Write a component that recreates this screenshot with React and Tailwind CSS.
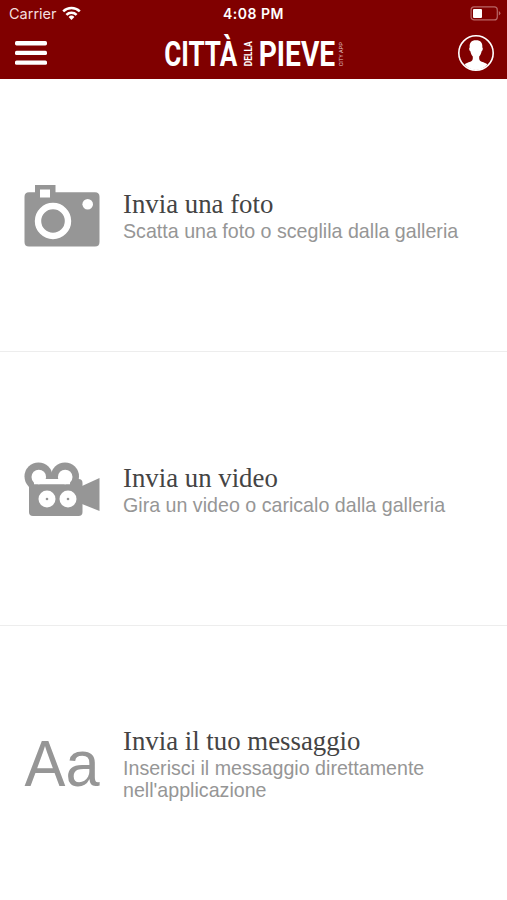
import React from 'react'

function WifiIcon() {
  return (
    <svg width="19" height="15" viewBox="0 0 19 15" fill="none" stroke="white" strokeWidth="2.5">
      <path d="M1.2 5.3a12 12 0 0 1 16.6 0" />
      <path d="M4.4 8.8a7.3 7.3 0 0 1 10.2 0" />
      <path d="M9.5 14 6.6 11a4.1 4.1 0 0 1 5.8 0Z" fill="white" stroke="none" />
    </svg>
  )
}

function BatteryIcon() {
  return (
    <svg width="31" height="15" viewBox="0 0 31 15">
      <rect x="1.1" y="0.9" width="26.2" height="13" rx="3" fill="none" stroke="#b96666" strokeWidth="1.2" />
      <rect x="3" y="3" width="9" height="9" rx="1" fill="white" />
      <path d="M28.8 5v4.6q1.6-.8 1.6-2.3T28.8 5Z" fill="#b96666" />
    </svg>
  )
}

function MenuIcon() {
  return (
    <svg width="32" height="26" viewBox="0 0 32 26" fill="white">
      <rect width="32" height="4.4" rx="1.6" y="1" />
      <rect width="32" height="4.4" rx="1.6" y="10.7" />
      <rect width="32" height="4.4" rx="1.6" y="20.4" />
    </svg>
  )
}

function Logo() {
  return (
    <svg width="181" height="44" viewBox="0 -4 181 44" className="overflow-visible" fill="white" fontFamily="Roboto, sans-serif" fontWeight="700">
      <text x="2.2" y="31" fontSize="34.5" textLength="73" lengthAdjust="spacingAndGlyphs">CITTÀ</text>
      <text transform="translate(90.2 31.3) rotate(-90)" fontSize="10.6" textLength="25" lengthAdjust="spacingAndGlyphs">DELLA</text>
      <text x="96.7" y="31" fontSize="34.5" textLength="76.5" lengthAdjust="spacingAndGlyphs">PIEVE</text>
      <text transform="translate(180.7 31.3) rotate(-90)" fontSize="5.6" fontWeight="400" fillOpacity="0.75" textLength="24" lengthAdjust="spacingAndGlyphs">CITY APP</text>
    </svg>
  )
}

function ProfileIcon() {
  return (
    <svg width="38" height="38" viewBox="0 0 38 38">
      <circle cx="19" cy="19" r="17.2" fill="none" stroke="white" strokeWidth="1.6" />
      <path
        d="M19 6.3c-4.8 0-6.8 2.7-6.3 7.2-.9.1-.5 3.4.7 3.8.3 2.3 1.3 4 2.4 5.2.2 3.2-.3 4.3-2.5 5.2-2.5.8-4.4 1.3-5.6 2.7A16.2 16.2 0 0 0 19 36a16.2 16.2 0 0 0 11.3-5.6c-1.2-1.4-3.1-1.9-5.6-2.7-2.2-.9-2.7-2-2.5-5.2 1.1-1.2 2.1-2.9 2.4-5.2 1.2-.4 1.6-3.7.7-3.8.5-4.5-1.5-7.2-6.3-7.2Z"
        fill="white"
      />
    </svg>
  )
}

function CameraIcon() {
  return (
    <svg width="76" height="64" viewBox="0 0 76 64" fill="#969696">
      <path d="M11 1h20.5v7.3H71q4.5 0 4.5 4.5V58q0 4.5-4.5 4.5H5Q.5 62.5.5 58V12.8Q.5 8.300 5 8.300h6Z" />
      <path d="M16 5.5h10v8H16Z" fill="white" />
      <circle cx="29" cy="37" r="15" fill="none" stroke="white" strokeWidth="6.4" />
      <circle cx="63.7" cy="20.3" r="5.3" fill="white" />
    </svg>
  )
}

function VideoIcon() {
  return (
    <svg width="76" height="56" viewBox="0 0 76 56" fill="#969696">
      <circle cx="14.5" cy="14.5" r="14" />
      <circle cx="41" cy="14.5" r="14" />
      <rect x="5" y="17" width="53.5" height="37" rx="4" />
      <path d="M58 24 75.5 16v33L58 42Z" />
      <g fill="white">
        <circle cx="14.8" cy="15" r="7.3" />
        <circle cx="41.2" cy="15" r="7.3" />
        <path d="M10 17h36v5.3H10Z" />
      </g>
      <circle cx="23" cy="37" r="8.5" fill="white" />
      <circle cx="44" cy="37" r="8.5" fill="white" />
      <circle cx="23" cy="37" r="1.3" />
      <circle cx="44" cy="37" r="1.3" />
    </svg>
  )
}

function TextIcon() {
  return (
    <svg width="76" height="76" viewBox="0 -10 76 76" className="overflow-visible" fill="#969696">
      <text x="0.5" y="50" fontFamily="Liberation Sans, sans-serif" fontSize="64" textLength="75" lengthAdjust="spacingAndGlyphs">Aa</text>
    </svg>
  )
}

const actions = [
  { icon: CameraIcon, title: 'Invia una foto', lines: ['Scatta una foto o sceglila dalla galleria'] },
  { icon: VideoIcon, title: 'Invia un video', lines: ['Gira un video o caricalo dalla galleria'] },
  { icon: TextIcon, title: 'Invia il tuo messaggio', lines: ['Inserisci il messaggio direttamente', "nell'applicazione"] },
]

export default function App() {
  return (
    <div className="flex h-[900px] w-[507px] flex-col bg-white font-['Liberation_Sans',sans-serif]">
      <header className="h-[79px] shrink-0 bg-[#800000] text-white">
        <div className="grid h-[27px] grid-cols-3 items-center pl-[9px] pr-[6px] font-['Inter',sans-serif] leading-none">
          <div className="flex items-center gap-[5px]">
            <span className="pt-px text-[14.5px] text-[#f3dede]">Carrier</span>
            <WifiIcon />
          </div>
          <span className="pr-[3px] text-center text-[14px] font-semibold tracking-[0.5px]">4:08 PM</span>
          <div className="flex justify-end">
            <BatteryIcon />
          </div>
        </div>
        <div className="flex h-[52px] items-center justify-between pl-[15px] pr-[12px]">
          <button aria-label="Menu"><MenuIcon /></button>
          <Logo />
          <button aria-label="Profilo"><ProfileIcon /></button>
        </div>
      </header>

      <main className="grid flex-1 grid-rows-[273px_274px_274px]">
        {actions.map(({ icon: Icon, title, lines }) => (
          <section key={title} className="flex items-center gap-[23px] border-b border-[#ededed] pt-[2px] pl-6 last:border-b-0">
            <Icon />
            <div>
              <h2 className="pb-[2px] font-['Liberation_Serif',serif] text-[26.8px] leading-[28px] text-[#444444]">{title}</h2>
              {lines.map((line) => (
                <p key={line} className="text-[19.65px] leading-[22px] text-[#969696]">{line}</p>
              ))}
            </div>
          </section>
        ))}
      </main>
    </div>
  )
}
